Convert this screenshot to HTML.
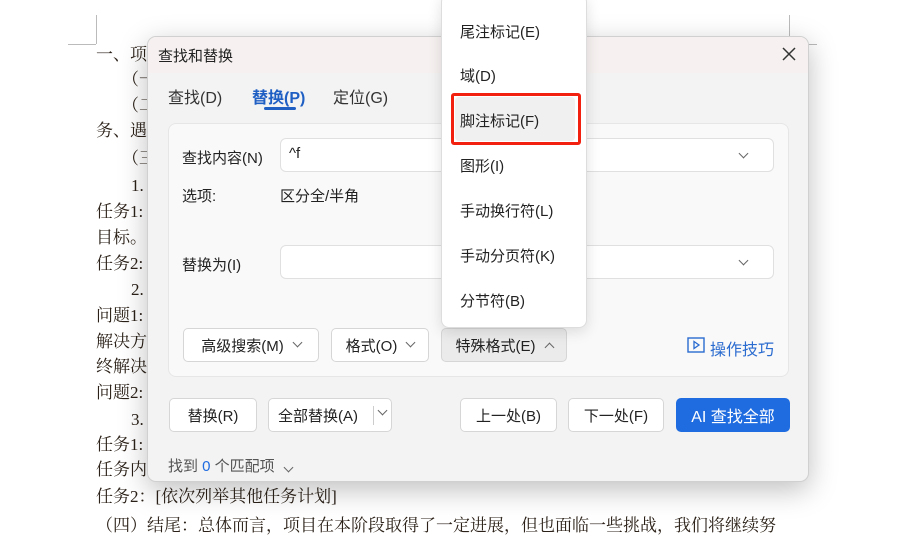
<!DOCTYPE html>
<html><head><meta charset="utf-8"><style>
*{margin:0;padding:0;box-sizing:border-box}
body{width:919px;height:521px;overflow:hidden;background:#fff;position:relative;font-family:"Liberation Sans","Noto Sans CJK SC",sans-serif;font-size:15px;color:#222}
.a{position:absolute;white-space:nowrap}
.doc{font-family:"Liberation Serif","Noto Serif CJK SC",serif;font-size:17px;color:#2b2118;line-height:20px}
.dlg{left:147px;top:36px;width:662px;height:446px;background:#f3f3f3;border-radius:9px;border:1px solid #d0d0d0;box-shadow:0 8px 28px rgba(0,0,0,.25);overflow:hidden}
.btn{position:absolute;background:#fff;border:1px solid #d6d6d6;border-radius:5px;font-size:15px;display:flex;align-items:center;justify-content:center;color:#222}
.inp{position:absolute;background:#fff;border:1px solid #e0e0e0;border-radius:6px}
.chev{display:inline-block;width:7px;height:7px;border-right:1.3px solid #666;border-bottom:1.3px solid #666;transform:rotate(45deg);margin-left:10px;margin-top:-5px}
.up{transform:rotate(-135deg);margin-top:5px}
.mi{position:absolute;left:460px;font-size:15px;color:#222}
</style></head><body>
<div class="a" style="left:96px;top:15px;width:1px;height:29px;background:#bbb"></div>
<div class="a" style="left:68px;top:44px;width:28px;height:1px;background:#bbb"></div>
<div class="a" style="left:789px;top:15px;width:1px;height:29px;background:#bbb"></div>
<div class="a" style="left:789px;top:44px;width:28px;height:1px;background:#bbb"></div>
<div class="a doc" style="left:96px;top:45px">一、项</div>
<div class="a doc" style="left:122px;top:70px">（一</div>
<div class="a doc" style="left:122px;top:96px">（二</div>
<div class="a doc" style="left:96px;top:121px">务、遇</div>
<div class="a doc" style="left:122px;top:149px">（三</div>
<div class="a doc" style="left:131px;top:176px">1.</div>
<div class="a doc" style="left:96px;top:202px">任务1:</div>
<div class="a doc" style="left:96px;top:228px">目标。</div>
<div class="a doc" style="left:96px;top:254px">任务2:</div>
<div class="a doc" style="left:131px;top:280px">2.</div>
<div class="a doc" style="left:96px;top:306px">问题1:</div>
<div class="a doc" style="left:96px;top:332px">解决方</div>
<div class="a doc" style="left:96px;top:357px">终解决</div>
<div class="a doc" style="left:96px;top:383px">问题2:</div>
<div class="a doc" style="left:131px;top:410px">3.</div>
<div class="a doc" style="left:96px;top:435px">任务1:</div>
<div class="a doc" style="left:96px;top:460px">任务内</div>
<div class="a doc" style="left:96px;top:487px">任务2：[依次列举其他任务计划]</div>
<div class="a doc" style="left:96px;top:516px">（四）结尾：总体而言，项目在本阶段取得了一定进展，但也面临一些挑战，我们将继续努</div>

<div class="a dlg">
  <div class="a" style="left:0;top:0;width:662px;height:36px;background:#f6f1f0"></div>
  <div class="a" style="left:10px;top:8px;font-size:15px">查找和替换</div>
  <svg class="a" style="left:633px;top:9px" width="16" height="16" viewBox="0 0 16 16"><path d="M2 2L14 14M14 2L2 14" stroke="#333" stroke-width="1.5"/></svg>
  <div class="a" style="left:20px;top:47px;font-size:16px;color:#333">查找(D)</div>
  <div class="a" style="left:104px;top:47px;font-size:16px;color:#1f5fc4;font-weight:bold">替换(P)</div>
  <div class="a" style="left:116px;top:70px;width:32px;height:3px;background:#1f5fc4;border-radius:2px"></div>
  <div class="a" style="left:185px;top:47px;font-size:16px;color:#333">定位(G)</div>
  <div class="a" style="left:20px;top:86px;width:621px;height:254px;background:#f9f9f9;border:1px solid #e6e6e6;border-radius:8px"></div>
  <div class="a" style="left:34px;top:110px">查找内容(N)</div>
  <div class="inp" style="left:132px;top:101px;width:494px;height:34px"></div>
  <div class="a" style="left:141px;top:108px;font-size:15px">^f</div>
  <div class="a" style="left:34px;top:148px">选项:</div>
  <div class="a" style="left:132px;top:148px">区分全/半角</div>
  <div class="a" style="left:34px;top:217px">替换为(I)</div>
  <div class="inp" style="left:132px;top:208px;width:494px;height:34px"></div>
  <span class="a chev" style="left:592px;top:113px;margin:0"></span>
  <span class="a chev" style="left:592px;top:220px;margin:0"></span>
  <div class="btn" style="left:35px;top:291px;width:136px;height:34px">高级搜索(M)<span class="chev"></span></div>
  <div class="btn" style="left:183px;top:291px;width:98px;height:34px">格式(O)<span class="chev"></span></div>
  <div class="btn" style="left:293px;top:291px;width:126px;height:34px;background:#ebebeb">特殊格式(E)<span class="chev up"></span></div>
  <svg class="a" style="left:539px;top:300px" width="18" height="16" viewBox="0 0 18 16"><rect x="1" y="1" width="16" height="14" fill="none" stroke="#2a6bd0" stroke-width="1.4"/><path d="M7 4.5L12 8L7 11.5Z" fill="none" stroke="#2a6bd0" stroke-width="1.3"/></svg>
  <div class="a" style="left:562px;top:299px;font-size:16px;color:#2a6bd0">操作技巧</div>
  <div class="btn" style="left:21px;top:361px;width:88px;height:34px">替换(R)</div>
  <div class="btn" style="left:120px;top:361px;width:124px;height:34px;justify-content:flex-start;padding-left:9px">全部替换(A)<span style="position:absolute;left:104px;top:7px;width:1px;height:19px;background:#ccc"></span><span class="chev" style="position:absolute;left:100px;top:13px"></span></div>
  <div class="btn" style="left:312px;top:361px;width:97px;height:34px">上一处(B)</div>
  <div class="btn" style="left:420px;top:361px;width:96px;height:34px">下一处(F)</div>
  <div class="btn" style="left:528px;top:361px;width:114px;height:34px;background:#1f6ce0;border-color:#1f6ce0;color:#fff;font-size:16px">AI 查找全部</div>
  <div class="a" style="left:20px;top:418px;color:#555">找到 <span style="color:#1f6ce0">0</span> 个匹配项<span class="chev" style="margin-left:10px"></span></div>
</div>

<div class="a" style="left:441px;top:-6px;width:146px;height:334px;background:#fff;border:1px solid #ddd;border-radius:8px;box-shadow:0 4px 14px rgba(0,0,0,.12)"></div>
<div class="a" style="left:455px;top:97px;width:120px;height:44px;background:#f0f0f0;border-radius:4px"></div>
<div class="a" style="left:451px;top:93px;width:130px;height:52px;border:3px solid #f2200f;border-radius:3px"></div>
<div class="mi" style="top:21px">尾注标记(E)</div>
<div class="mi" style="top:65px">域(D)</div>
<div class="mi" style="top:110px">脚注标记(F)</div>
<div class="mi" style="top:155px">图形(I)</div>
<div class="mi" style="top:200px">手动换行符(L)</div>
<div class="mi" style="top:245px">手动分页符(K)</div>
<div class="mi" style="top:290px">分节符(B)</div>
</body></html>
